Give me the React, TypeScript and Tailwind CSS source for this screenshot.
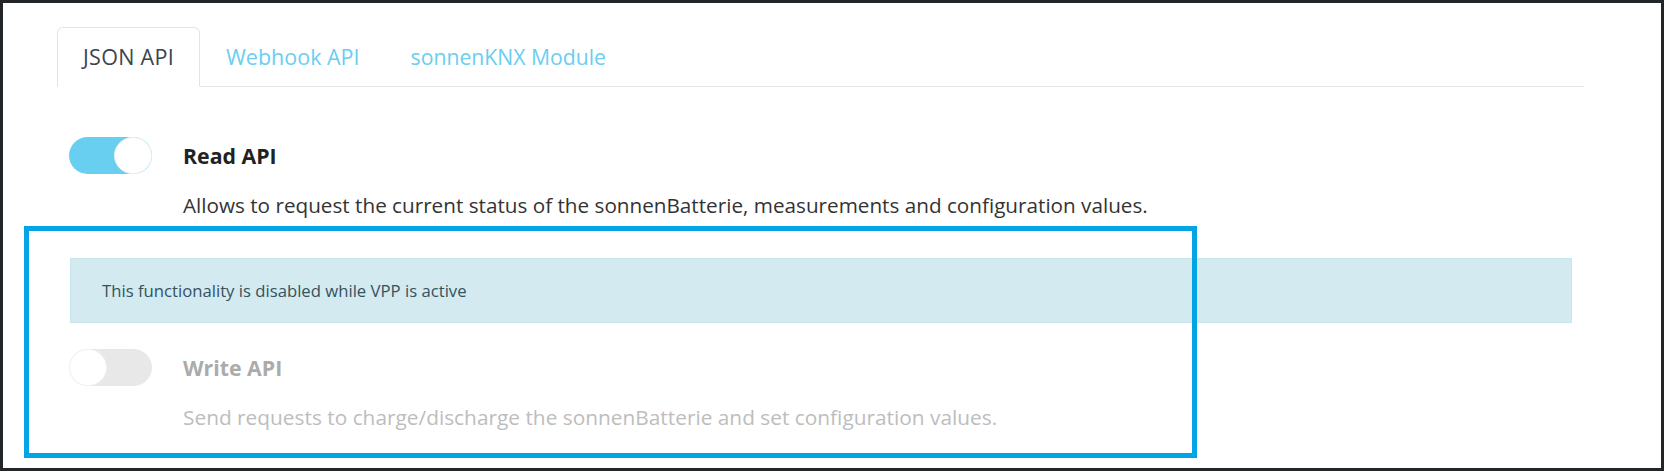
import React from "react";

function Toggle({ on, disabled }: { on: boolean; disabled?: boolean }) {
  if (on) {
    return (
      <div className="relative w-[83px] h-[37px] rounded-full bg-[#68cff0] shrink-0">
        <div className="absolute right-0 top-0 w-[38px] h-[37px] rounded-full bg-white border border-[#eef0f1]" />
      </div>
    );
  }
  return (
    <div className={`relative w-[83px] h-[37px] rounded-full bg-[#e6e6e6] shrink-0 ${disabled ? "opacity-90" : ""}`}>
      <div className="absolute left-0 top-0 w-[38px] h-[37px] rounded-full bg-white border border-[#f1f1f1]" />
    </div>
  );
}

export default function App() {
  return (
    <div className="relative w-[1664px] h-[471px] border-[3px] border-[#232629] bg-white font-['Open_Sans','Noto_Sans',sans-serif] overflow-hidden">
      <div className="pl-[54px] pr-[77px] pt-[24px]">
        <div className="flex h-[60px] border-b border-[#e6e9ec] text-[21.5px]">
          <div className="-mb-px h-[60px] px-[25px] flex items-center border border-[#e0e4e7] border-b-white rounded-t-[6px] text-[#3a4550] bg-white tracking-[0.3px]">
            JSON API
          </div>
          <div className="-mb-px h-[60px] px-[25px] flex items-center border border-transparent text-[#6acef0]">
            Webhook API
          </div>
          <div className="-mb-px h-[60px] px-[24px] flex items-center border border-transparent text-[#6acef0] text-[21.2px]">
            sonnenKNX Module
          </div>
        </div>
      </div>

      <div className="pl-[66px] pr-[89px] pt-[50px]">
        <div className="flex gap-[31px]">
          <Toggle on />
          <div className="flex flex-col">
            <div className="h-[37px] flex items-center text-[21.3px] font-bold text-[#222]">Read API</div>
            <div className="mt-[16px] leading-[30px] text-[20.7px] text-[#333]">
              Allows to request the current status of the sonnenBatterie, measurements and configuration values.
            </div>
          </div>
        </div>

        <div className="mt-[38px] ml-[1px] h-[65px] flex items-center pl-[31px] bg-[#d4eaf1] border border-[#c8e5ed] text-[16.7px] text-[#34525c]">
          This functionality is disabled while VPP is active
        </div>

        <div className="mt-[26px] flex gap-[31px]">
          <Toggle on={false} disabled />
          <div className="flex flex-col">
            <div className="h-[37px] flex items-center text-[21.3px] font-bold text-[#ababab]">Write API</div>
            <div className="mt-[16px] leading-[30px] text-[20.85px] text-[#bdbdbd]">
              Send requests to charge/discharge the sonnenBatterie and set configuration values.
            </div>
          </div>
        </div>
      </div>

      <div className="absolute left-[21px] top-[223px] w-[1173px] h-[232px] border-[5px] border-[#03a4e6] pointer-events-none" />
    </div>
  );
}
